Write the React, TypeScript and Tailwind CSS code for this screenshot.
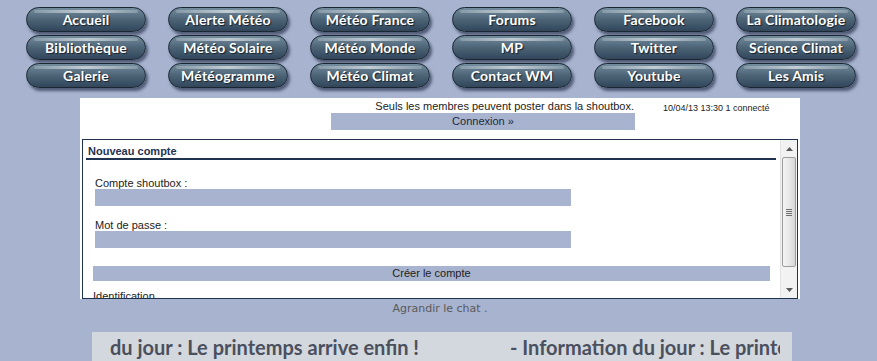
import React from 'react';

const menu = [
  ['Accueil', 'Alerte Météo', 'Météo France', 'Forums', 'Facebook', 'La Climatologie'],
  ['Bibliothèque', 'Météo Solaire', 'Météo Monde', 'MP', 'Twitter', 'Science Climat'],
  ['Galerie', 'Météogramme', 'Météo Climat', 'Contact WM', 'Youtube', 'Les Amis'],
];

const NavButton = ({ label }: { label: string }) => (
  <a
    href="#"
    className="relative flex h-[25px] w-[120px] items-center justify-center rounded-full border border-[#1a2631] bg-gradient-to-b from-[#738c9e] via-[#4d6477] to-[#31465a] text-[14px] font-bold tracking-[0.2px] text-white shadow-[2px_3px_3px_rgba(35,45,70,0.65)] [text-shadow:1px_1px_1px_#16202a]"
    style={{ fontFamily: 'Lato, "Open Sans", sans-serif' }}
  >
    <span className="absolute left-[7px] right-[7px] top-[2px] h-[3px] rounded-full bg-gradient-to-r from-white/20 via-white/60 to-white/20" />
    <span className="relative">{label}</span>
  </a>
);

const Scrollbar = () => (
  <div className="flex w-[17px] flex-col border-l border-[#e3e3e3] bg-[#f2f2f2]">
    <div className="flex h-[17px] items-center justify-center">
      <svg width="7" height="4" viewBox="0 0 7 4">
        <path d="M0 4 L3.5 0 L7 4 Z" fill="#5a5a5a" />
      </svg>
    </div>
    <div className="mx-[1px] flex h-[110px] items-center justify-center rounded-[2px] border border-[#9c9c9c] bg-gradient-to-r from-[#f4f4f4] via-[#e8e8e8] to-[#d6d6d6]">
      <div className="flex flex-col gap-[1px]">
        <div className="h-px w-[6px] bg-[#6e6e6e]" />
        <div className="h-px w-[6px] bg-[#6e6e6e]" />
        <div className="h-px w-[6px] bg-[#6e6e6e]" />
        <div className="h-px w-[6px] bg-[#6e6e6e]" />
      </div>
    </div>
    <div className="flex-1" />
    <div className="flex h-[17px] items-center justify-center">
      <svg width="7" height="4" viewBox="0 0 7 4">
        <path d="M0 0 L3.5 4 L7 0 Z" fill="#5a5a5a" />
      </svg>
    </div>
  </div>
);

export default function App() {
  return (
    <div
      className="h-[361px] min-h-screen overflow-hidden bg-[#a7b3cf] text-[11px] text-[#222]"
      style={{ fontFamily: '"Liberation Sans", Arial, sans-serif' }}
    >
      {/* menu */}
      <div className="grid w-max grid-cols-6 gap-x-[22px] gap-y-[3px] pl-[26px] pt-[7px]">
        {menu.flat().map((m) => (
          <NavButton key={m} label={m} />
        ))}
      </div>

      {/* shoutbox */}
      <div className="ml-[80px] mt-[10px] h-[201px] w-[720px] bg-white pt-[1px]">
        <div className="flex">
          <div className="flex w-[555px] flex-col items-end">
            <div className="pr-[1px] leading-[14px]">Seuls les membres peuvent poster dans la shoutbox.</div>
            <div className="flex h-[17px] w-[304px] items-center justify-center bg-[#a7b3cf] text-[#1c2a3c]">
              Connexion »
            </div>
          </div>
          <div className="ml-[28px] pt-[3px] text-[9px] leading-[12px]">10/04/13 13:30 1 connecté</div>
        </div>

        <div className="ml-[2px] mt-[9px] flex h-[160px] w-[716px] border border-[#1f3350]">
          <div className="flex-1 overflow-hidden">
            <div className="ml-[3px] mt-[4px] w-[690px] border-b-2 border-[#1f3350] pl-[2px] font-bold leading-[14px] text-[#1f3350]">
              Nouveau compte
            </div>
            <div className="ml-[12px] mt-[17px] h-[12px] leading-[12px]">Compte shoutbox :</div>
            <div className="ml-[12px] h-[17px] w-[476px] bg-[#a7b3cf]" />
            <div className="ml-[12px] mt-[13px] h-[12px] leading-[12px]">Mot de passe :</div>
            <div className="ml-[12px] h-[17px] w-[476px] bg-[#a7b3cf]" />
            <div className="ml-[10px] mt-[18px] flex h-[15px] w-[677px] items-center justify-center bg-[#a7b3cf]">
              Créer le compte
            </div>
            <div className="ml-[10px] mt-[8px] leading-[14px]">Identification</div>
          </div>
          <Scrollbar />
        </div>
      </div>

      <div
        className="mt-[3px] w-[880px] text-center text-[11px] leading-[14px] text-[#5a5a5a]"
        style={{ fontFamily: '"DejaVu Sans", Verdana, sans-serif' }}
      >
        Agrandir le chat .
      </div>

      {/* marquee */}
      <div className="ml-[92px] mt-[16px] h-[30px] w-[700px] bg-[#d3d7de] pl-[18px] pr-[12px]">
        <div
          className="flex h-full gap-[91px] overflow-hidden whitespace-nowrap pt-[3px] text-[20px] font-bold leading-[24px] text-[#4a505d]"
          style={{ fontFamily: 'Lato, sans-serif' }}
        >
          <span>du jour : Le printemps arrive enfin !</span>
          <span>- Information du jour : Le printemps arrive enfin !</span>
        </div>
      </div>
    </div>
  );
}
